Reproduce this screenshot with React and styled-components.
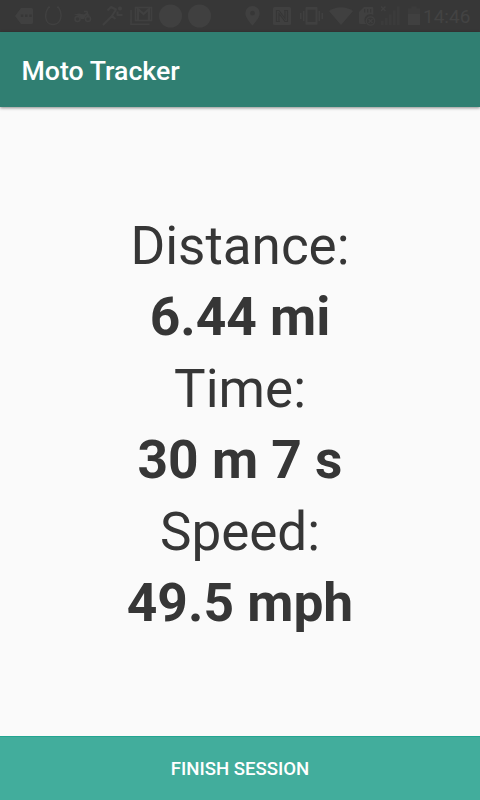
import React from "react";
import styled, { createGlobalStyle } from "styled-components";

const GlobalStyle = createGlobalStyle`
  * { box-sizing: border-box; }
  body { margin: 0; font-family: Roboto, sans-serif; background: #fafafa; }
`;

const Screen = styled.div`
  display: flex;
  flex-direction: column;
  width: 480px;
  height: 800px;
  background: #fafafa;
  overflow: hidden;
`;

const StatusBar = styled.div`
  display: flex;
  flex: none;
  height: 32px;
  background: #373737;
  color: #404040;
`;

const StatusIcon = styled.svg`
  flex: none;
  width: ${(p) => p.$width}px;
  height: 32px;
  margin-left: ${(p) => p.$gap}px;
  fill: currentColor;
  stroke: none;
`;

const Clock = styled.time`
  margin-left: 3px;
  font-size: 19px;
  line-height: 33px;
  color: #434343;
  white-space: nowrap;
`;

const AppBar = styled.header`
  display: flex;
  align-items: center;
  flex: none;
  height: 75px;
  padding: 3px 21.5px 0;
  background: #307f72;
  box-shadow: 0 1px 3px rgba(0, 0, 0, 0.45);
  z-index: 1;
`;

const Title = styled.h1`
  margin: 0;
  font-size: 26.7px;
  font-weight: 500;
  line-height: 32px;
  color: #fff;
  white-space: nowrap;
`;

const Stats = styled.main`
  flex: 1;
  display: flex;
  flex-direction: column;
  justify-content: center;
  padding-top: 6.4px;
  text-align: center;
  color: #363636;
`;

const StatLine = styled.div`
  font-size: ${(p) => (p.$strong ? 53.3 : 53)}px;
  line-height: 71.4px;
  font-weight: ${(p) => (p.$strong ? 700 : 400)};
  padding-top: ${(p) => (p.$strong ? 0 : 1)}px;
  margin-bottom: ${(p) => (p.$strong ? 0 : -1)}px;
`;

const FinishButton = styled.button`
  flex: none;
  height: 64px;
  padding: 1px 0 0;
  border: 0;
  border-top: 1px solid #22a591;
  background: #42ad9c;
  color: #fff;
  font: 500 18.6px/22px Roboto, sans-serif;
`;

function StatusIcons() {
  return (
    <>
      <StatusIcon $gap={15} $width={18} viewBox="0 0 18 32">
        <path fillRule="evenodd" d="M6 8h10.500q1.500 0 1.500 1.500v13q0 1.500-1.500 1.500H6L0 16zM5.800 14.600v2.500h2.500v-2.500zM10 14.600v2.500h2.500v-2.500zM14.200 14.600v2.500h2.500v-2.500z" />
      </StatusIcon>
      <StatusIcon $gap={12} $width={17} viewBox="0 0 17 32">
        <path d="M5 7.300H3.500C-1 14-.5 24.500 8 24.500S18 14 13.500 7.300H12" fill="none" stroke="currentColor" strokeWidth="1.400" />
      </StatusIcon>
      <StatusIcon $gap={12} $width={18} viewBox="0 0 18 32">
        <g fill="none" stroke="currentColor" strokeWidth="1.500">
          <circle cx="3.500" cy="19" r="2.500" />
          <circle cx="14" cy="19" r="2.500" />
          <path d="M10 11.500h3l1.500 6" />
        </g>
        <path d="M0 14.500l5-1 5 1 3-2 3 3-4 0-2 3.500H7l-2-3z" />
      </StatusIcon>
      <StatusIcon $gap={10} $width={23} viewBox="0 0 23 32">
        <circle cx="18" cy="8.500" r="2.100" />
        <path d="M5.500 10.500L9 7l5 2.500-4 6.500 3.500 3M10 16l-3 3-6 6M15.500 11.500v3.500h5" fill="none" stroke="currentColor" strokeWidth="2" strokeLinejoin="round" />
      </StatusIcon>
      <StatusIcon $gap={5} $width={23} viewBox="0 0 23 32">
        <path d="M1 10v14.300h18.500M5.500 7.500h16v13h-16z" fill="none" stroke="currentColor" strokeWidth="1.600" />
        <path d="M8 20V9l5.500 5L19 9v11" fill="none" stroke="currentColor" strokeWidth="2.300" />
      </StatusIcon>
      <StatusIcon $gap={6} $width={23} viewBox="0 0 23 32">
        <circle cx="11.500" cy="16" r="11.500" />
      </StatusIcon>
      <StatusIcon $gap={6} $width={23} viewBox="0 0 23 32">
        <circle cx="11.500" cy="16" r="11.500" />
      </StatusIcon>
      <StatusIcon $gap={34} $width={15} viewBox="0 0 15 32">
        <path fillRule="evenodd" d="M7.500 6A7.200 7.200 0 0 1 14.700 13.200C14.700 18 7.500 25.500 7.500 25.500S.3 18 .3 13.200A7.200 7.200 0 0 1 7.500 6zM7.500 10.800a2.400 2.400 0 1 0 0 4.800 2.400 2.400 0 0 0 0-4.800z" />
      </StatusIcon>
      <StatusIcon $gap={13} $width={18} viewBox="0 0 18 32">
        <rect y="7" width="18" height="18" rx="1.500" />
        <path d="M7 21.500H3.500V10.500H6l6 8V10M11 10.500h3.500v11H12l-6-8V22" fill="none" stroke="#363636" strokeWidth="1.200" />
      </StatusIcon>
      <StatusIcon $gap={9} $width={23} viewBox="0 0 23 32">
        <path d="M6.500 8.500h10v15h-10z" fill="none" stroke="currentColor" strokeWidth="2" />
        <path d="M6 7h11v2.500H6zM6 22h11v2.500H6zM3 11h1.500v10H3zM0 13h1.500v6H0zM18.500 11H20v10h-1.500zM21.500 13H23v6h-1.500z" />
      </StatusIcon>
      <StatusIcon $gap={6} $width={24} viewBox="0 0 24 32">
        <path d="M0 11Q12 3.500 24 11L12 25z" />
      </StatusIcon>
      <StatusIcon $gap={6} $width={17} viewBox="0 0 17 32">
        <path fillRule="evenodd" d="M5 7h8q1.300 0 1.300 1.300V15a5.800 5.800 0 0 0-7.200 9H1.300Q0 24 0 22.500V12zM5 9v3.500h1.300V9zM8 9v3.500h1.300V9zM11 9v3.500h1.300V9z" />
        <circle cx="11.500" cy="21" r="4.200" fill="none" stroke="currentColor" strokeWidth="1.200" />
        <path d="M9.500 19l4 4m0-4l-4 4" stroke="currentColor" strokeWidth="1.200" />
      </StatusIcon>
      <StatusIcon $gap={5} $width={19} viewBox="0 0 19 32">
        <path d="M0 6.500l4.500 4.500m0-4.500L0 11" stroke="currentColor" strokeWidth="1.300" />
        <path opacity=".5" d="M0 21h2.500v4H0zM4 18h2.500v7H4zM8 14.500h2.500V25H8zM12 10.500h2.500V25H12zM16 6.500h2.500V25H16z" />
      </StatusIcon>
      <StatusIcon $gap={8} $width={12} viewBox="0 0 12 32">
        <path opacity=".5" d="M3.500 6.500h5v2H12V14H0V8.500h3.500z" />
        <path d="M0 14h12v11H0z" />
      </StatusIcon>
    </>
  );
}

export default function App() {
  return (
    <Screen>
      <GlobalStyle />
      <StatusBar>
        <StatusIcons />
        <Clock>14:46</Clock>
      </StatusBar>
      <AppBar>
        <Title>Moto Tracker</Title>
      </AppBar>
      <Stats>
        <StatLine>Distance:</StatLine>
        <StatLine $strong>6.44 mi</StatLine>
        <StatLine>Time:</StatLine>
        <StatLine $strong>30 m 7 s</StatLine>
        <StatLine>Speed:</StatLine>
        <StatLine $strong>49.5 mph</StatLine>
      </Stats>
      <FinishButton>FINISH SESSION</FinishButton>
    </Screen>
  );
}
